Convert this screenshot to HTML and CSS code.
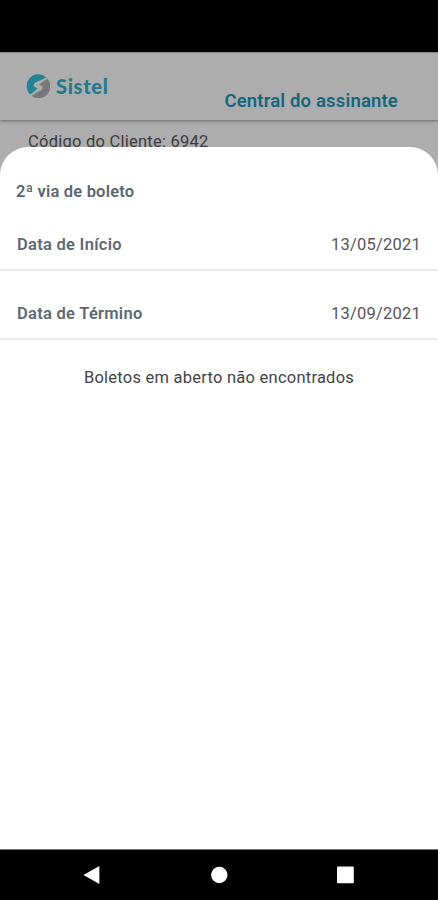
FILE: index.html
```html
<!DOCTYPE html>
<html lang="pt-BR">
<head>
<meta charset="utf-8">
<meta name="viewport" content="width=device-width">
<title>Sistel</title>
<link rel="stylesheet" href="styles.css">
</head>
<body>
<div class="phone">
  <div class="status-bar"></div>
  <header class="header">
    <div class="brand">
      <svg class="brand-mark" viewBox="0 0 24 24" aria-hidden="true">
        <path class="mark-teal" d="M4.400 20.600A11.600 11.600 0 0 1 20.400 3.400L9.500 8.400Q6.800 10.300 8.200 12.500L11.700 14.600Z"/>
        <path class="mark-gray" d="M21.400 4.700A11.700 11.700 0 0 1 5.600 21.800L15.400 16Q17.800 13.800 16 12L12.800 10.400Z"/>
      </svg>
      <span class="brand-name">Sistel</span>
    </div>
    <h1 class="title">Central do assinante</h1>
  </header>
  <div class="client">Código do Cliente: 6942</div>
  <main class="sheet">
    <h2 class="sheet-title">2ª via de boleto</h2>
    <div class="row row-start"><span class="label">Data de Início</span><span class="date">13/05/2021</span></div>
    <div class="row row-end"><span class="label">Data de Término</span><span class="date">13/09/2021</span></div>
    <p class="empty">Boletos em aberto não encontrados</p>
  </main>
  <nav class="nav-bar">
    <svg class="nav-icon" viewBox="0 0 20 20"><path d="M1.400 10 17.400 1V19Z"/></svg>
    <svg class="nav-icon" viewBox="0 0 20 20"><circle cx="10.300" cy="10" r="8.200"/></svg>
    <svg class="nav-icon" viewBox="0 0 20 20"><rect x="2" y="1.400" width="16.800" height="16.800" rx="1"/></svg>
  </nav>
</div>
</body>
</html>
```
FILE: styles.css
```css
* { box-sizing: border-box; margin: 0; }
body { background: #000; font-family: Roboto, sans-serif; }
.phone {
  display: flex;
  flex-direction: column;
  width: 438px;
  height: 900px;
  overflow: hidden;
  background: #adadad;
}
.status-bar { height: 52px; background: #000; flex: none; }
.header {
  display: flex;
  justify-content: space-between;
  flex: none;
  height: 68px;
  padding: 0 40px 0 26px;
  border-top: 1px solid #858585;
  background: #adadad;
  box-shadow: 0 1px 3px rgba(0, 0, 0, .4);
}
.brand { display: flex; height: 24px; margin-top: 21px; gap: 6px; }
.brand-mark { width: 24px; height: 24px; }
.mark-teal { fill: #238397; }
.mark-gray { fill: #77787b; }
.brand-name {
  font: 900 20px/24px Lato, sans-serif;
  color: #21798b;
  letter-spacing: .7px;
}
.title {
  margin-top: 36px;
  font-size: 18.5px;
  line-height: 24px;
  font-weight: 600;
  color: #146680;
  letter-spacing: .16px;
}
.client {
  flex: none;
  height: 27px;
  padding: 10px 0 0 28px;
  font-size: 16.5px;
  line-height: 24px;
  color: #3c3c3c;
  letter-spacing: .24px;
  white-space: nowrap;
}
.sheet {
  flex: 1;
  background: #fff;
  border-radius: 28px 28px 0 0;
}
.sheet-title {
  padding: 33px 16px 0;
  font-size: 16.5px;
  line-height: 24px;
  font-weight: 600;
  color: #5b6670;
  letter-spacing: .2px;
}
.row {
  display: flex;
  justify-content: space-between;
  padding: 0 17px;
  line-height: 24px;
  font-size: 16.5px;
  border-bottom: 2px solid #ebebeb;
}
.row-start { height: 67px; padding-top: 29px; }
.row-end { height: 69px; padding-top: 31px; }
.label { font-weight: 600; color: #5e6872; letter-spacing: .28px; }
.date { color: #555; letter-spacing: .22px; }
.empty {
  margin-top: 26px;
  text-align: center;
  font-size: 16.5px;
  line-height: 24px;
  color: #444;
  letter-spacing: .24px;
}
.nav-bar {
  display: flex;
  flex: none;
  justify-content: space-between;
  align-items: center;
  height: 51px;
  padding: 0 83px 0 82px;
  border-top: 1px solid #777;
  background: #000;
}
.nav-icon { width: 20px; height: 20px; fill: #fff; }
```
